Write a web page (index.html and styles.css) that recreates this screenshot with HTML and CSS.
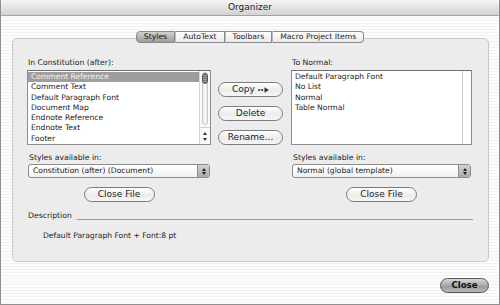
FILE: index.html
```html
<!DOCTYPE html>
<html lang="en">
<head>
    <meta charset="UTF-8">
    <title>Organizer</title>
    <link rel="stylesheet" href="styles.css">
</head>
<body>
    <div class="window">
        <div class="titlebar">Organizer</div>

        <div class="content">
            <div class="tabs">
                <span class="tab active">Styles</span>
                <span class="tab">AutoText</span>
                <span class="tab">Toolbars</span>
                <span class="tab">Macro Project Items</span>
            </div>

            <div class="groupbox">
                <div class="transfer">
                    <div class="col">
                        <div class="label">In Constitution (after):</div>
                        <div class="listbox">
                            <ul class="items">
                                <li class="selected">Comment Reference</li>
                                <li>Comment Text</li>
                                <li>Default Paragraph Font</li>
                                <li>Document Map</li>
                                <li>Endnote Reference</li>
                                <li>Endnote Text</li>
                                <li>Footer</li>
                            </ul>
                            <div class="scrollbar">
                                <div class="track"><div class="thumb"></div></div>
                                <div class="arrows">
                                    <span class="arrow up"></span>
                                    <span class="arrow down"></span>
                                </div>
                            </div>
                        </div>
                    </div>

                    <div class="actions">
                        <button class="btn">Copy
                            <svg class="copy-arrow" width="11" height="6" viewBox="0 0 11 6">
                                <circle cx="1.2" cy="3" r="1.1" fill="#333"/>
                                <circle cx="4.2" cy="3" r="1.1" fill="#333"/>
                                <path d="M6.5 0.2 L10.8 3 L6.5 5.8 Z" fill="#333"/>
                            </svg>
                        </button>
                        <button class="btn">Delete</button>
                        <button class="btn">Rename...</button>
                    </div>

                    <div class="col">
                        <div class="label">To Normal:</div>
                        <div class="listbox">
                            <ul class="items">
                                <li>Default Paragraph Font</li>
                                <li>No List</li>
                                <li>Normal</li>
                                <li>Table Normal</li>
                            </ul>
                            <div class="scrollbar empty"></div>
                        </div>
                    </div>
                </div>

                <div class="sources">
                    <div class="source">
                        <div class="label">Styles available in:</div>
                        <div class="popup">
                            <span>Constitution (after) (Document)</span>
                            <span class="popup-arrows"><i class="up"></i><i class="down"></i></span>
                        </div>
                        <button class="btn">Close File</button>
                    </div>
                    <div class="source">
                        <div class="label">Styles available in:</div>
                        <div class="popup">
                            <span>Normal (global template)</span>
                            <span class="popup-arrows"><i class="up"></i><i class="down"></i></span>
                        </div>
                        <button class="btn">Close File</button>
                    </div>
                </div>

                <div class="description">
                    <div class="desc-head"><span>Description</span><span class="rule"></span></div>
                    <div class="desc-text">Default Paragraph Font + Font:8 pt</div>
                </div>
            </div>

            <div class="footer">
                <button class="btn default">Close</button>
            </div>
        </div>
    </div>
</body>
</html>
```

FILE: styles.css
```css
* {
    box-sizing: border-box;
}
body {
    margin: 0;
    font-family: "DejaVu Sans", "Liberation Sans", sans-serif;
    color: #1c1c1c;
    background: #fff;
}
.window {
    width: 500px;
    height: 305px;
    border: 1px solid #8f8f8f;
    border-top: none;
    background: repeating-linear-gradient(to bottom, #fdfdfd 0, #fdfdfd 2px, #f1f1f1 2px, #f1f1f1 3px);
}
.titlebar {
    height: 16px;
    line-height: 15px;
    text-align: center;
    font-size: 9px;
    color: #222;
    background: linear-gradient(#f5f5f5, #d3d3d3);
    border-bottom: 1px solid #a2a2a2;
    border-radius: 4px 4px 0 0;
}
.content {
    padding-top: 15px;
}

/* tabs */
.tabs {
    position: relative;
    z-index: 1;
    display: flex;
    justify-content: center;
    height: 12px;
}
.tab {
    font-size: 7.7px;
    line-height: 10px;
    padding: 0 7px;
    background: linear-gradient(#ffffff, #e9e9e9);
    border: 1px solid #8a8a8a;
    border-left: 1px solid #bdbdbd;
    color: #222;
}
.tab:first-child {
    border-left: 1px solid #8a8a8a;
    border-radius: 4px 0 0 4px;
}
.tab:last-child {
    border-radius: 0 4px 4px 0;
}
.tab.active {
    background: linear-gradient(#d2d2d2, #9c9c9c);
    color: #111;
}

/* group box */
.groupbox {
    margin: -5px 10px 0 11px;
    height: 224px;
    background: #ececec;
    border: 1px solid #c9c9c9;
    border-radius: 5px;
    padding: 19px 15px 0 14px;
}
.transfer, .sources {
    display: grid;
    grid-template-columns: 184px 65px 182px;
    column-gap: 7px;
}
.transfer > .col:last-child, .sources > .source:last-child {
    grid-column: 3;
    margin-left: 1px;
}
.label {
    font-size: 7.7px;
    line-height: 10px;
    margin-bottom: 2px;
    padding-left: 1px;
}
.listbox {
    display: flex;
    height: 75px;
    background: #fff;
    border: 1px solid #8c8c8c;
    border-top-color: #6e6e6e;
}
.items {
    flex: 1;
    list-style: none;
    margin: 0;
    padding: 1px 0 0 0;
    font-size: 7.6px;
    line-height: 10.25px;
}
.items li {
    padding-left: 3px;
    white-space: nowrap;
}
.items li.selected {
    background: #9e9e9e;
    color: #f6f6f6;
}
.scrollbar {
    width: 11px;
    display: flex;
    flex-direction: column;
    border-left: 1px solid #d6d6d6;
    background: #fafafa;
}
.scrollbar.empty {
    width: 9px;
    background: #fff;
    border-left: 1px solid #cfcfcf;
}
.track {
    flex: 1;
    margin: 1px 2px 2px 2px;
    border: 1px solid #c8c8c8;
    border-radius: 4px;
    background: linear-gradient(to right, #e6e6e6, #fff, #e6e6e6);
}
.thumb {
    height: 11px;
    margin: 0 -1px;
    border-radius: 4px;
    border: 1px solid #555;
    background: repeating-linear-gradient(to bottom, #7a7a7a 0, #7a7a7a 1px, #9a9a9a 1px, #9a9a9a 2px);
}
.arrows {
    height: 17px;
    display: flex;
    flex-direction: column;
    align-items: center;
    justify-content: space-around;
    border-top: 1px solid #cfcfcf;
    padding: 2px 0;
}
.arrow {
    width: 0;
    height: 0;
    border-left: 2px solid transparent;
    border-right: 2px solid transparent;
}
.arrow.up {
    border-bottom: 3px solid #333;
}
.arrow.down {
    border-top: 3px solid #333;
}

/* buttons */
.actions {
    display: flex;
    flex-direction: column;
    gap: 9px;
    padding-top: 24px;
}
.btn {
    height: 15px;
    padding: 0;
    font-family: "DejaVu Sans", "Liberation Sans", sans-serif;
    font-size: 9px;
    line-height: 13px;
    color: #1e1e1e;
    background: linear-gradient(#ffffff, #ececec 55%, #f6f6f6);
    border: 1px solid #7b7b7b;
    border-radius: 8px;
    display: flex;
    align-items: center;
    justify-content: center;
    gap: 3px;
}
.copy-arrow {
    margin-top: 1px;
}
.btn.default {
    width: 49px;
    font-weight: bold;
    font-size: 8.6px;
    background: linear-gradient(#d8d8d8, #9d9d9d 60%, #b9b9b9);
    border-color: #555;
    color: #111;
}

/* source popups */
.sources {
    margin-top: 8px;
}
.source {
    display: flex;
    flex-direction: column;
    align-items: center;
}
.source .label {
    align-self: stretch;
    margin-bottom: 1px;
    padding-left: 2px;
}
.popup {
    align-self: stretch;
    margin-left: 1px;
    margin-right: 1px;
    height: 14px;
    display: flex;
    justify-content: space-between;
    font-size: 7.6px;
    line-height: 12px;
    padding-left: 4px;
    background: linear-gradient(#ffffff, #f1f1f1);
    border: 1px solid #8c8c8c;
    border-radius: 3px;
}
.popup-arrows {
    width: 12px;
    display: flex;
    flex-direction: column;
    align-items: center;
    justify-content: center;
    gap: 1px;
    background: linear-gradient(#d4d4d4, #a9a9a9);
    border-left: 1px solid #8c8c8c;
    border-radius: 0 2px 2px 0;
}
.popup-arrows i {
    width: 0;
    height: 0;
    border-left: 2px solid transparent;
    border-right: 2px solid transparent;
}
.popup-arrows .up {
    border-bottom: 3px solid #222;
}
.popup-arrows .down {
    border-top: 3px solid #222;
}
.source .btn {
    width: 71px;
    margin-top: 9px;
}

/* description */
.description {
    margin-top: 9px;
    padding-left: 1px;
}
.desc-head {
    display: flex;
    align-items: center;
    font-size: 7.7px;
    line-height: 10px;
    gap: 5px;
}
.rule {
    flex: 1;
    height: 1px;
    margin-top: 6px;
    background: #9a9a9a;
}
.desc-text {
    margin-top: 10px;
    padding-left: 15px;
    font-size: 7.6px;
    line-height: 10px;
}

.footer {
    display: flex;
    justify-content: flex-end;
    padding: 16px 10px 0 0;
}
```
